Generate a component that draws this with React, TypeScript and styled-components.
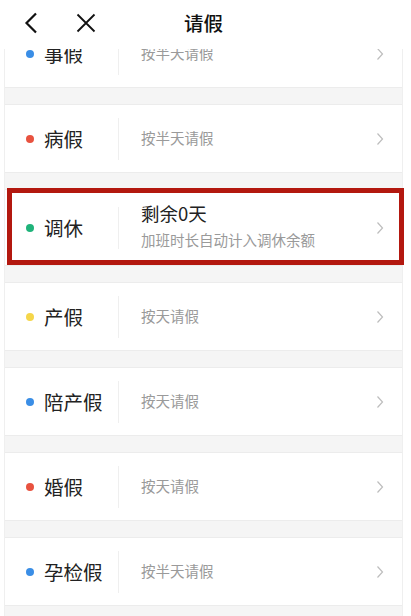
import React from "react";
import styled, { createGlobalStyle } from "styled-components";

const Global = createGlobalStyle`
  html, body { margin: 0; padding: 0; background: #ffffff; }
  body { font-family: "Noto Sans CJK SC", "Noto Sans", sans-serif; }
  * { box-sizing: border-box; }
`;

const Page = styled.div`
  width: 411px;
  height: 616px;
  overflow: hidden;
  background: #fff;
  display: flex;
  flex-direction: column;
`;

const Header = styled.header`
  height: 49px;
  flex: 0 0 49px;
  display: grid;
  grid-template-columns: 1fr auto 1fr;
  align-items: center;
  background: #fff;
  padding-bottom: 3px;
`;

const HeaderLeft = styled.div`
  display: flex;
  align-items: center;
  padding-left: 24px;
  gap: 38px;
  height: 100%;
`;

const IconBtn = styled.span`
  display: inline-flex;
  align-items: center;
  justify-content: center;
`;

const Title = styled.h1`
  margin: 0;
  font-size: 19.5px;
  font-weight: 500;
  color: #111;
  line-height: 1;
  transform: translate(-2px, 0);
`;

const Viewport = styled.div`
  flex: 1;
  overflow: hidden;
  padding: 0 8px 0 4px;
`;

const List = styled.div`
  margin-top: -29px;
  border-left: 1px solid #efefef;
  border-right: 1px solid #efefef;
  background: #f5f5f5;
  display: flex;
  flex-direction: column;
`;

const Gap = styled.div`
  height: 18px;
  background: #f5f5f5;
  border-top: 1px solid #ececec;
  border-bottom: 1px solid #ececec;
`;

const Card = styled.div<{ $tall?: boolean }>`
  position: relative;
  height: ${(p) => (p.$tall ? 75 : 67)}px;
  background: #fff;
  display: flex;
  align-items: center;
  padding-right: 18px;
`;

const Left = styled.div`
  width: 113px;
  display: flex;
  align-items: center;
  padding-left: 21px;
  gap: 10px;
`;

const Dot = styled.span<{ $color: string }>`
  width: 8px;
  height: 8px;
  border-radius: 50%;
  background: ${(p) => p.$color};
  flex: 0 0 8px;
`;

const Label = styled.span`
  font-size: 19.5px;
  color: #222;
  line-height: 1;
  white-space: nowrap;
`;

const Divider = styled.span`
  width: 1px;
  height: 42px;
  background: #efefef;
  flex: 0 0 1px;
`;

const Body = styled.div<{ $tall?: boolean }>`
  flex: 1;
  padding-left: 22px;
  padding-bottom: ${(p) => (p.$tall ? 4 : 0)}px;
  display: flex;
  flex-direction: column;
  justify-content: center;
  gap: 10.5px;
`;

const Main = styled.span`
  font-size: 18.5px;
  color: #222;
  line-height: 1;
`;

const Sub = styled.span`
  font-size: 14.5px;
  color: #9a9a9a;
  line-height: 1;
  white-space: nowrap;
`;

const Highlight = styled.div`
  position: absolute;
  top: -2px;
  left: 2px;
  right: -2px;
  bottom: 0;
  border: 5px solid #b3180f;
  pointer-events: none;
`;

const Chevron = () => (
  <svg width="8" height="14" viewBox="0 0 8 14">
    <polyline points="1.5,1.5 6.5,7 1.5,12.5" fill="none" stroke="#bdbdbd" strokeWidth="1.2" />
  </svg>
);

type Item = { label: string; color: string; sub: string; main?: string };

const items: Item[] = [
  { label: "事假", color: "#3a8ee6", sub: "按半天请假" },
  { label: "病假", color: "#e8523f", sub: "按半天请假" },
  { label: "调休", color: "#1fb37a", main: "剩余0天", sub: "加班时长自动计入调休余额" },
  { label: "产假", color: "#f5d64a", sub: "按天请假" },
  { label: "陪产假", color: "#3a8ee6", sub: "按天请假" },
  { label: "婚假", color: "#e8523f", sub: "按天请假" },
  { label: "孕检假", color: "#3a8ee6", sub: "按半天请假" },
];

export default function App() {
  return (
    <>
      <Global />
      <Page>
        <Header>
          <HeaderLeft>
            <IconBtn>
              <svg width="14" height="22" viewBox="0 0 14 22">
                <polyline points="12,1.5 2.5,11 12,20.5" fill="none" stroke="#111" strokeWidth="2.2" />
              </svg>
            </IconBtn>
            <IconBtn>
              <svg width="20" height="20" viewBox="0 0 20 20">
                <path d="M1.5 1.5 L18.5 18.5 M18.5 1.5 L1.5 18.5" fill="none" stroke="#111" strokeWidth="1.8" />
              </svg>
            </IconBtn>
          </HeaderLeft>
          <Title>请假</Title>
          <div />
        </Header>
        <Viewport>
          <List>
            {items.map((it, i) => (
              <React.Fragment key={it.label}>
                {i > 0 && <Gap />}
                <Card $tall={!!it.main}>
                  <Left>
                    <Dot $color={it.color} />
                    <Label>{it.label}</Label>
                  </Left>
                  <Divider />
                  <Body $tall={!!it.main}>
                    {it.main && <Main>{it.main}</Main>}
                    <Sub>{it.sub}</Sub>
                  </Body>
                  <Chevron />
                  {it.main && <Highlight />}
                </Card>
              </React.Fragment>
            ))}
            <Gap />
          </List>
        </Viewport>
      </Page>
    </>
  );
}
